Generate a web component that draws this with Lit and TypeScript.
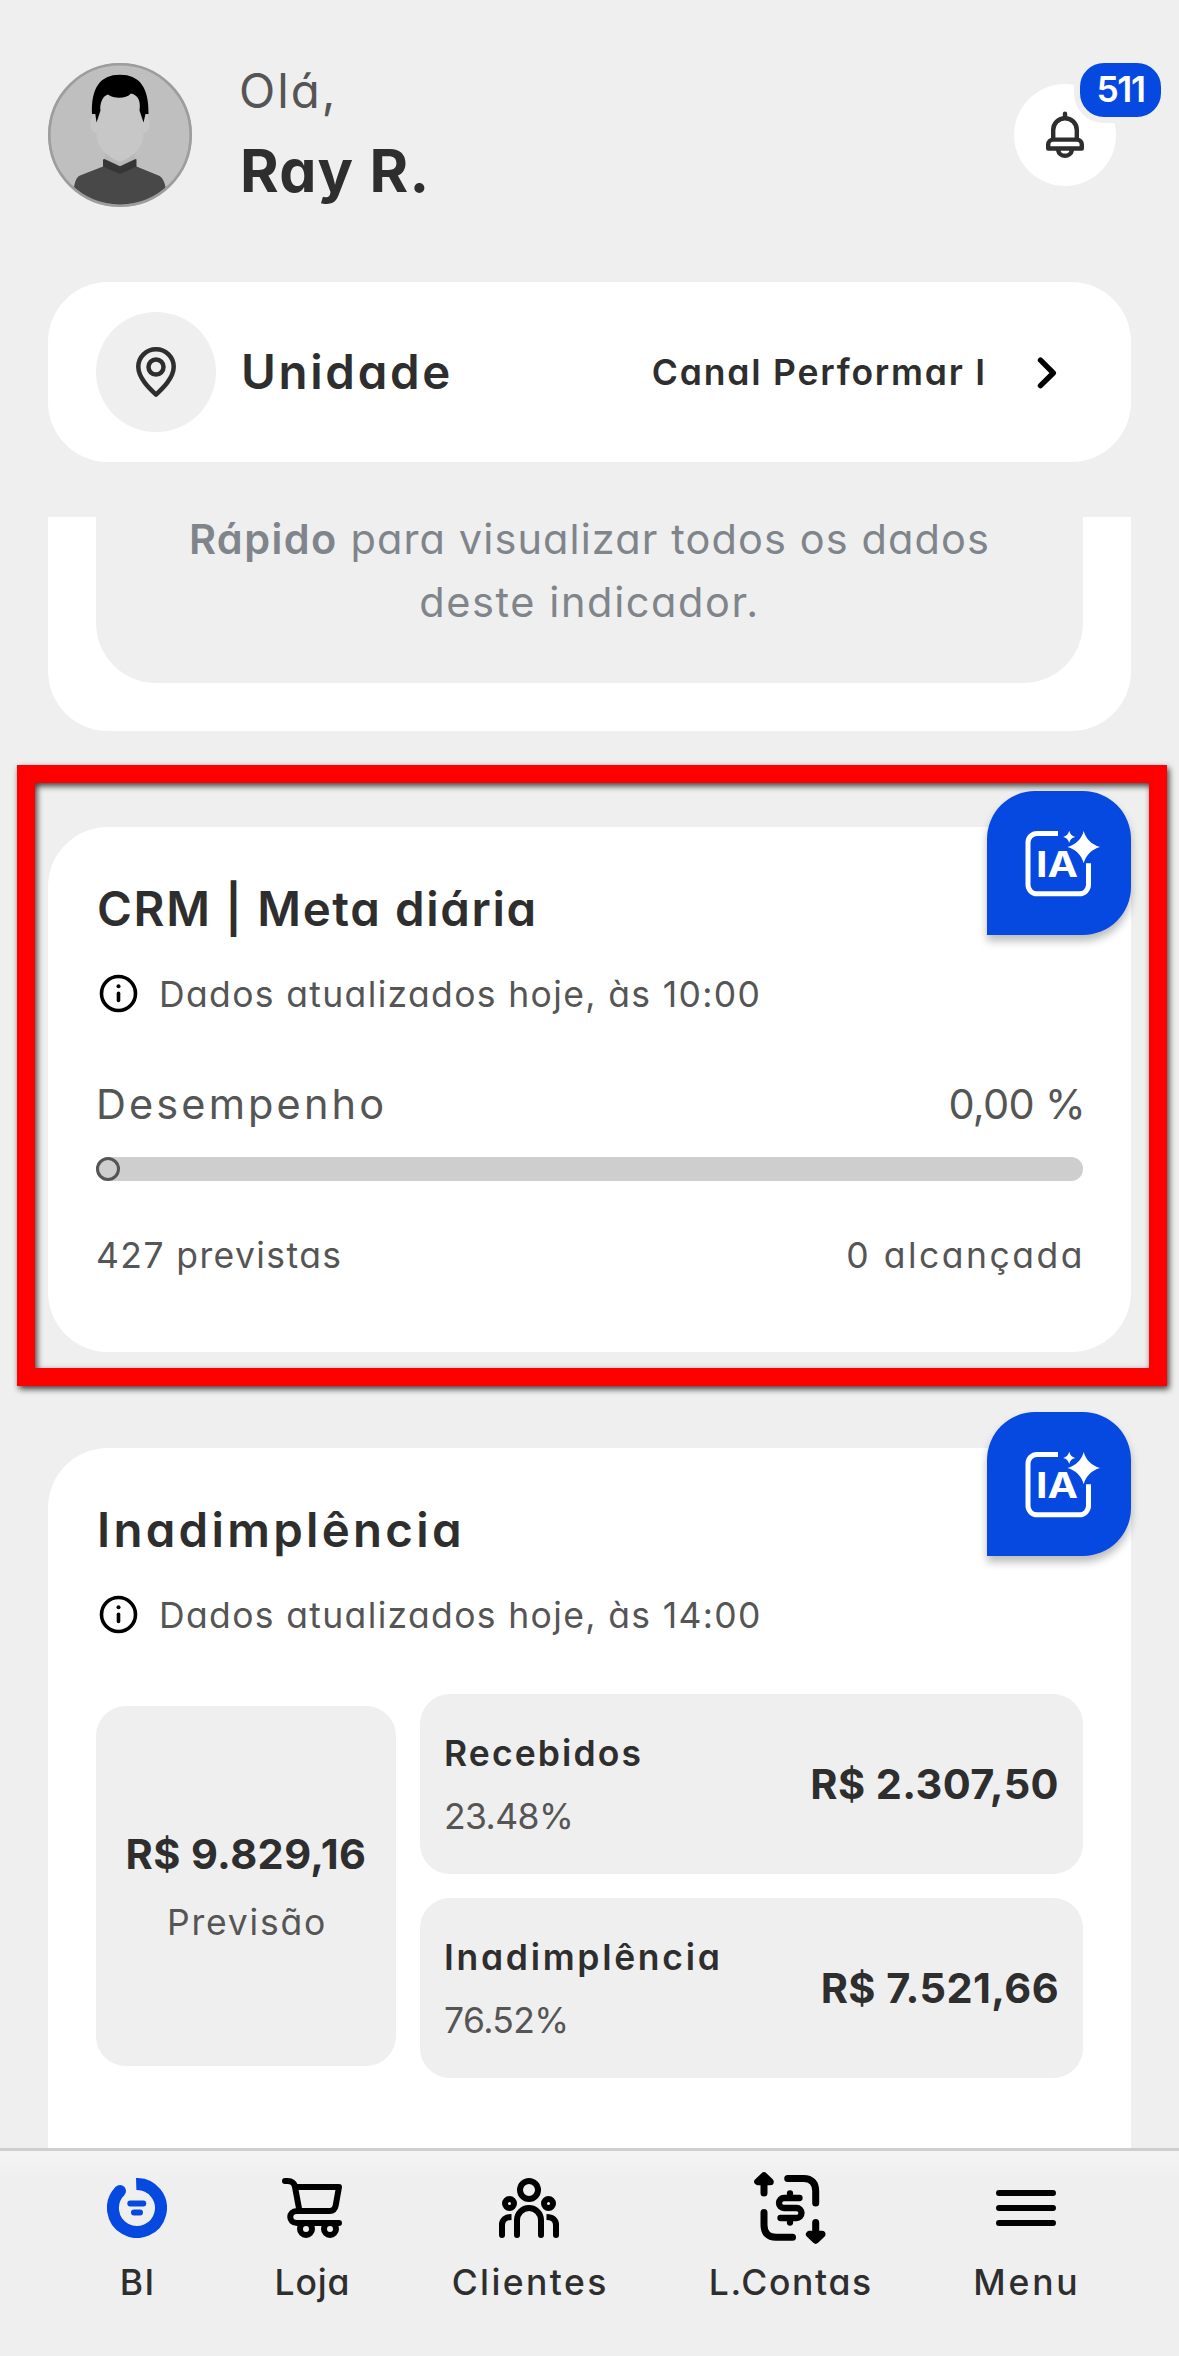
import { LitElement, html, css, svg } from "lit";
import { customElement, property } from "lit/decorators.js";

const icons = {
  bell: svg`<svg viewBox="0 0 38 48" width="38" height="48" fill="none" stroke="#2e2e2e" stroke-width="4.4" stroke-linecap="round" stroke-linejoin="round">
    <path d="M19 2.6V7M7.2 28.6V19a11.8 11.8 0 0 1 23.6 0v9.6M7.2 28.6h23.6a5 5 0 0 1 5 5v3.9H2.2v-3.9a5 5 0 0 1 5-5zM12 38.8c1.4 8 12.6 8 14 0"/></svg>`,
  pin: svg`<svg viewBox="0 0 40 50" width="40" height="50" fill="none" stroke="#2e2e2e" stroke-width="4.5" stroke-linejoin="round">
    <path d="M20 47.6C13.500 41.500 2.300 31 2.300 19.800a17.700 17.500 0 0 1 35.400 0C37.700 31 26.500 41.500 20 47.600z"/><circle cx="20" cy="20" r="7.500"/></svg>`,
  chevron: svg`<svg viewBox="0 0 20 32" width="20" height="32" fill="none" stroke="#000" stroke-width="5.400" stroke-linecap="round" stroke-linejoin="round">
    <path d="M3.500 3.200L16.300 16 3.500 28.700"/></svg>`,
  info: svg`<svg viewBox="0 0 45 45" width="45" height="45" fill="none" stroke="#000" stroke-width="3.600" stroke-linecap="round">
    <circle cx="22.500" cy="22.500" r="17"/><path d="M22.500 22.300v7.200"/><circle cx="22.500" cy="15.200" r="2" fill="#000" stroke="none"/></svg>`,
  bi: svg`<svg viewBox="0 0 60 60" width="60" height="60" fill="none" stroke="#0549e1" stroke-width="12">
    <path d="M29.200 6a24 24 0 1 1-16.200 7"/><circle cx="13" cy="13" r="6" fill="#0549e1" stroke="none"/>
    <path d="M23.300 25.500h13M27 34.500h6" stroke-width="6" stroke-linecap="round"/></svg>`,
  cart: svg`<svg viewBox="0 0 60 60" width="60" height="60" fill="none" stroke="#000" stroke-width="6" stroke-linecap="round" stroke-linejoin="round">
    <path d="M3 3h2.500c4.500 0 6.800 1.800 7.500 6l4.500 24M13.500 9H57l-3.300 18.500c-.7 3.700-2.700 5.500-6 5.500H15c-9 0-9 12 0 12h42"/>
    <circle cx="24" cy="51" r="6"/><circle cx="48" cy="51" r="6"/></svg>`,
  clients: svg`<svg viewBox="0 0 60 60" width="60" height="60" fill="none" stroke="#000" stroke-width="6" stroke-linecap="round">
    <circle cx="30" cy="12" r="9"/><circle cx="10.500" cy="25.500" r="4.500"/><circle cx="49.500" cy="25.500" r="4.500"/>
    <path d="M18 57V42a12 12 0 0 1 24 0v15M3 57V46.500"/><path d="M57 57V46.500"/>
    <path d="M3 47c0-5 3.500-8 9.500-8M57 47c0-5-3.500-8-9.500-8" stroke-linecap="butt"/></svg>`,
  bills: svg`<svg viewBox="0 0 72 72" width="72" height="72" fill="none" stroke="#000" stroke-width="7" stroke-linecap="round" stroke-linejoin="round">
    <path d="M10 21V10M33.700 6.500H49.500c8 0 12.200 4.500 12.200 12.500v12M10 40.500V53c0 8 4 12.300 12 12.300h16.500M61.700 50.500V62"/>
    <path d="M10 3.700L3.700 9.700h12.600zM61.700 68.300L55.400 62.300H68z" fill="#000"/>
    <path d="M45.500 26H30a5 5 0 0 0 0 10h12.500a5 5 0 0 1 0 10H26.500M36 21.500V25M36 47v3.500" stroke-width="6.300"/></svg>`,
  menu: svg`<svg viewBox="0 0 60 60" width="60" height="60" fill="none" stroke="#000" stroke-width="6" stroke-linecap="round">
    <path d="M3 15h54M3 30h54M3 45h54"/></svg>`,
};

@customElement("user-avatar")
export class UserAvatar extends LitElement {
  static styles = css`
    :host { display: block; width: 144px; height: 144px; }
    svg { display: block; }
  `;
  render() {
    return html`<svg viewBox="0 0 144 144" width="144" height="144">
      <defs><clipPath id="c"><circle cx="72" cy="72" r="71" /></clipPath></defs>
      <circle cx="72" cy="72" r="72" fill="#bfbfbf" />
      <g clip-path="url(#c)">
        <path d="M57 88h30v12L72 108 57 100z" fill="#b8b8b8" />
        <ellipse cx="47" cy="60" rx="4.500" ry="9.500" fill="#c7c7c7" />
        <ellipse cx="97" cy="60" rx="4.500" ry="9.500" fill="#c7c7c7" />
        <path d="M48.500 30h47v41c0 14-11 23-23.500 28-12.500-5-23.500-14-23.500-28z" fill="#c7c7c7" />
        <path d="M44 51C43 25 52 11.700 72 11.700S101 25 100.500 51H97.500L95.500 59.500 91.500 47.500C93 38 90 32 83 30.500 78 36 66 36 60 31.500 54 33 51.500 42 52.500 47.500L48.500 59.500 47.300 51z" fill="#000" />
        <path d="M26 124c1-5 2-9.500 6-11.500l23-9 17 6 16.500-6 22 9c4 2 6 6 7 11.500v20H26z" fill="#484848" />
        <path d="M56.500 96L72 103.200 87.500 96l1 .5v7.200L72 111l-17-7.300v-7.200z" fill="#363636" />
      </g>
      <circle cx="72" cy="72" r="70.700" fill="none" stroke="#9d9d9d" stroke-width="2.600" />
    </svg>`;
  }
}

@customElement("ia-button")
export class IaButton extends LitElement {
  static styles = css`
    :host {
      display: flex;
      width: 144px;
      height: 144px;
      border-radius: 48px 48px 48px 0;
      background: #0549e1;
      box-shadow: 0 6px 9px rgba(0, 0, 0, 0.27);
    }
    text { font: 700 35px Inter, sans-serif; fill: #fff; }
  `;
  render() {
    return html`<svg viewBox="0 0 144 144" width="144" height="144">
      <path d="M71 42.500H50a9 9 0 0 0-9 9v42.300a9 9 0 0 0 9 9h42.500a9 9 0 0 0 9-9V72.300" fill="none" stroke="#fff" stroke-width="5" />
      <path d="M96.700 40C99 48 104.500 53.500 113 56c-8.500 2.500-14 8-16.300 16.300C94.500 64 89 58.500 80.500 56 89 53.500 94.500 48 96.700 40z" fill="#fff" />
      <path d="M82.200 39.800c.9 3.400 2.600 5.200 6 6.100-3.500.9-5.100 2.600-6 6-.9-3.500-2.600-5.100-6-6 3.400-.9 5.100-2.700 6-6.100z" fill="#fff" />
      <text x="49" y="85.800" textLength="42" lengthAdjust="spacingAndGlyphs">IA</text>
    </svg>`;
  }
}

@customElement("nav-item")
export class NavItem extends LitElement {
  @property() label = "";
  @property({ attribute: false }) icon: unknown;
  static styles = css`
    :host { display: flex; flex-direction: column; align-items: center; }
    .icon { display: flex; height: 60px; align-items: center; justify-content: center; }
    .icon svg { flex: none; }
    .label {
      margin-top: 18px;
      font-size: 35.5px;
      line-height: 54px;
      font-weight: 500;
      color: #2e2e2e;
      letter-spacing: var(--track, 2px);
      margin-right: calc(var(--track, 2px) * -1);
      white-space: nowrap;
    }
  `;
  render() {
    return html`<div class="icon">${this.icon}</div><div class="label">${this.label}</div>`;
  }
}

@customElement("app-root")
export class AppRoot extends LitElement {
  static styles = css`
    :host {
      display: flex;
      flex-direction: column;
      width: 1179px;
      height: 2356px;
      overflow: hidden;
      background: #efefef;
      color: #2e2e2e;
      font-family: Inter, "Open Sans", sans-serif;
      font-feature-settings: "cv11";
      font-size: 35.5px;
      line-height: 54px;
      white-space: nowrap;
    }
    * { box-sizing: border-box; }
    svg { display: block; flex: none; }
    .muted { color: #555; }
    .semi { font-weight: 600; }

    .header { display: flex; height: 282px; padding: 55px 63px 0 48px; flex: none; align-items: flex-start; }
    .header user-avatar { margin-top: 8px; }
    .greet { margin-left: 47px; }
    .hello { font-size: 47.4px; line-height: 72px; letter-spacing: 2px; color: #555; }
    .name { margin: 4px 0 0 1px; font-size: 59px; line-height: 80px; font-weight: 700; letter-spacing: 1.2px; }
    .bell {
      position: relative;
      display: flex;
      align-items: center;
      justify-content: center;
      width: 102px;
      height: 102px;
      margin: 29px 0 0 auto;
      border-radius: 50%;
      background: #fff;
    }
    .badge {
      position: absolute;
      top: -27px;
      left: 60px;
      width: 93px;
      height: 66px;
      border: 6px solid #efefef;
      border-radius: 30px;
      background: #0549e1;
      color: #fff;
      font-weight: 600;
      text-align: center;
      letter-spacing: -1.4px;
    }

    .unit {
      display: flex;
      flex: none;
      align-items: center;
      height: 180px;
      margin: 0 48px;
      padding: 0 74px 0 48px;
      border-radius: 60px;
      background: #fff;
    }
    .unit > svg { margin-top: 2px; }
    .spot { display: flex; align-items: center; justify-content: center; width: 120px; height: 120px; border-radius: 50%; background: #efefef; }
    .unit-title { margin-left: 25px; font-size: 47.4px; font-weight: 600; letter-spacing: 2.7px; }
    .unit-value { margin: 2px 50px 0 auto; font-weight: 600; letter-spacing: 1.79px; }

    .scroll { display: flex; flex-direction: column; gap: 96px; margin-top: 45px; height: 1641px; padding: 10px 48px 0; overflow: hidden; flex: none; }
    .card { position: relative; flex: none; border-radius: 60px; background: #fff; padding: 46px 48px 0; }
    .first { height: 214px; border-radius: 0 0 60px 60px; padding: 0 48px; }
    .hint { height: 166px; border-radius: 0 0 60px 60px; background: #efefef; color: #80858b; font-size: 41.5px; text-align: center; }
    .hint-top { height: 54px; line-height: 44px; letter-spacing: 1.1px; }
    .hint-end { line-height: 63px; letter-spacing: 1.6px; }
    .strong { font-weight: 600; letter-spacing: 1.4px; }

    .title { margin-left: 1px; font-size: 47.4px; line-height: 72px; font-weight: 600; }
    .track-crm { letter-spacing: 1.65px; }
    .track-debt { letter-spacing: 3.3px; }
    .info { display: flex; align-items: center; height: 54px; margin-top: 21px; }
    .info-text { margin-left: 18px; padding-top: 3px; letter-spacing: 1.35px; color: #555; }
    ia-button { position: absolute; right: 0; top: -36px; }

    .crm { height: 525px; }
    .split { display: flex; justify-content: space-between; color: #555; }
    .perf { margin-top: 54px; font-size: 41.5px; line-height: 60px; }
    .perf-label { letter-spacing: 3.1px; }
    .perf-value { letter-spacing: -0.7px; margin-right: -2px; }
    .bar { height: 24px; margin-top: 23px; border-radius: 12px; background: #cecece; }
    .knob { width: 24px; height: 24px; border: 3px solid #555; border-radius: 50%; }
    .totals { margin-top: 48px; }
    .planned { letter-spacing: 1.4px; }
    .reached { letter-spacing: 2.5px; margin-right: -2px; }
    .marker {
      position: absolute;
      inset: -62px -36px -34px -31px;
      border: 18px solid #f00;
      filter: drop-shadow(2px 3px 3px rgba(0, 0, 0, 0.75));
      z-index: 2;
      pointer-events: none;
    }

    .debt { height: 900px; }
    .grid { display: flex; align-items: center; gap: 24px; margin-top: 53px; }
    .tile { display: flex; background: #efefef; border-radius: 30px; }
    .forecast { width: 300px; height: 360px; padding-top: 1px; flex-direction: column; align-items: center; justify-content: center; gap: 10px; }
    .money { font-size: 41.5px; line-height: 63px; font-weight: 700; letter-spacing: 0.4px; }
    .forecast-label { letter-spacing: 1.8px; margin-right: -2px; }
    .stack { display: flex; flex-direction: column; flex: 1; gap: 24px; }
    .line { height: 180px; align-items: center; justify-content: space-between; padding: 2px 24px 0 24px; }
    .line .money { margin: -2px 0 0; }
    .pair { display: flex; flex-direction: column; gap: 9px; }
    .track-rec { letter-spacing: 2.1px; }
    .track-ina { letter-spacing: 2.7px; }
    .pct { letter-spacing: -0.6px; }

    .nav {
      display: flex;
      flex: none;
      justify-content: space-evenly;
      height: 208px;
      padding-top: 27px;
      border-top: 3px solid #cecece;
      background: linear-gradient(#f4f4f4, #efefef 30px);
    }
    .n-bi { width: 66px; --track: 1.3px; }
    .n-loja { width: 76px; --track: 0.8px; }
    .n-clientes { width: 150px; --track: 2.4px; }
    .n-contas { width: 164px; --track: 1.64px; }
    .n-menu { width: 99px; --track: 2.8px; }
  `;

  private info(text: string) {
    return html`<div class="info">${icons.info}<span class="info-text">${text}</span></div>`;
  }

  private line(label: string, cls: string, pct: string, value: string) {
    return html`<div class="tile line">
      <div class="pair"><span class="semi ${cls}">${label}</span><span class="muted pct">${pct}</span></div>
      <span class="money">${value}</span>
    </div>`;
  }

  render() {
    return html`
      <div class="header">
        <user-avatar></user-avatar>
        <div class="greet">
          <div class="hello">Olá,</div>
          <div class="name">Ray R.</div>
        </div>
        <div class="bell">${icons.bell}<div class="badge">511</div></div>
      </div>

      <div class="unit">
        <div class="spot">${icons.pin}</div>
        <span class="unit-title">Unidade</span>
        <span class="unit-value">Canal Performar I</span>
        ${icons.chevron}
      </div>

      <div class="scroll">
        <div class="card first">
          <div class="hint">
            <div class="hint-top"><span class="strong">Rápido</span> para visualizar todos os dados</div>
            <div class="hint-end">deste indicador.</div>
          </div>
        </div>

        <div class="card crm">
          <div class="title track-crm">CRM | Meta diária</div>
          ${this.info("Dados atualizados hoje, às 10:00")}
          <div class="split perf"><span class="perf-label">Desempenho</span><span class="perf-value">0,00 %</span></div>
          <div class="bar"><div class="knob"></div></div>
          <div class="split totals"><span class="planned">427 previstas</span><span class="reached">0 alcançada</span></div>
          <ia-button></ia-button>
          <div class="marker"></div>
        </div>

        <div class="card debt">
          <div class="title track-debt">Inadimplência</div>
          ${this.info("Dados atualizados hoje, às 14:00")}
          <div class="grid">
            <div class="tile forecast">
              <span class="money">R$ 9.829,16</span>
              <span class="muted forecast-label">Previsão</span>
            </div>
            <div class="stack">
              ${this.line("Recebidos", "track-rec", "23.48%", "R$ 2.307,50")}
              ${this.line("Inadimplência", "track-ina", "76.52%", "R$ 7.521,66")}
            </div>
          </div>
          <ia-button></ia-button>
        </div>
      </div>

      <div class="nav">
        <nav-item class="n-bi" label="BI" .icon=${icons.bi}></nav-item>
        <nav-item class="n-loja" label="Loja" .icon=${icons.cart}></nav-item>
        <nav-item class="n-clientes" label="Clientes" .icon=${icons.clients}></nav-item>
        <nav-item class="n-contas" label="L.Contas" .icon=${icons.bills}></nav-item>
        <nav-item class="n-menu" label="Menu" .icon=${icons.menu}></nav-item>
      </div>
    `;
  }
}
